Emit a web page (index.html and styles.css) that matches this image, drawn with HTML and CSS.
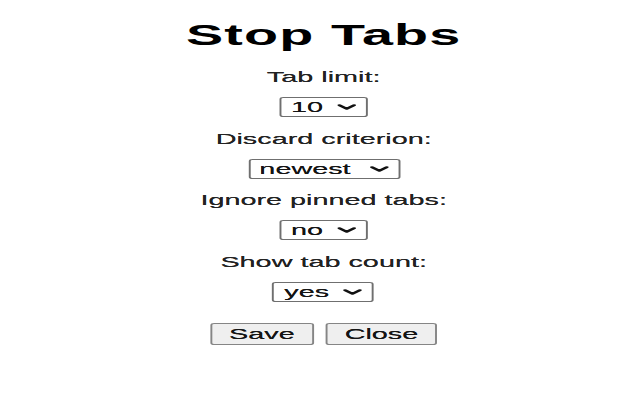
FILE: index.html
```html
<!DOCTYPE html>
<html lang="en">
<head>
<meta charset="utf-8">
<title>Stop Tabs</title>
<link rel="stylesheet" href="styles.css">
</head>
<body>
<main class="popup">
  <h1 class="title">Stop Tabs</h1>
  <form class="options">
    <div class="field">
      <label class="field-label" for="limit">Tab limit:</label>
      <span class="select-wrap">
        <select id="limit" class="select sel-sm">
          <option>5</option>
          <option selected>10</option>
          <option>15</option>
          <option>20</option>
        </select>
        <svg class="chevron" viewBox="0 0 10 6" aria-hidden="true"><path d="M1.2 1.2 L5 4.7 L8.8 1.2"/></svg>
      </span>
    </div>
    <div class="field">
      <label class="field-label" for="criterion">Discard criterion:</label>
      <span class="select-wrap">
        <select id="criterion" class="select sel-lg">
          <option selected>newest</option>
          <option>oldest</option>
        </select>
        <svg class="chevron" viewBox="0 0 10 6" aria-hidden="true"><path d="M1.2 1.2 L5 4.7 L8.8 1.2"/></svg>
      </span>
    </div>
    <div class="field">
      <label class="field-label" for="pinned">Ignore pinned tabs:</label>
      <span class="select-wrap">
        <select id="pinned" class="select sel-sm">
          <option>yes</option>
          <option selected>no</option>
        </select>
        <svg class="chevron" viewBox="0 0 10 6" aria-hidden="true"><path d="M1.2 1.2 L5 4.7 L8.8 1.2"/></svg>
      </span>
    </div>
    <div class="field">
      <label class="field-label" for="count">Show tab count:</label>
      <span class="select-wrap">
        <select id="count" class="select sel-md">
          <option selected>yes</option>
          <option>no</option>
        </select>
        <svg class="chevron" viewBox="0 0 10 6" aria-hidden="true"><path d="M1.2 1.2 L5 4.7 L8.8 1.2"/></svg>
      </span>
    </div>
    <div class="actions">
      <button type="button" class="btn">Save</button>
      <button type="button" class="btn">Close</button>
    </div>
  </form>
</main>
</body>
</html>
```

FILE: styles.css
```css
html,
body {
  margin: 0;
  background: #fff;
}

body {
  font-family: "Liberation Sans", Arial, sans-serif;
  color: #222;
}

.popup {
  box-sizing: border-box;
  width: 320px;
  margin: 0 auto;
  display: flex;
  flex-direction: column;
  align-items: center;
  padding-top: 18px;
  transform: scaleX(1.92);
  transform-origin: 156px 0;
}

.title {
  margin: 0;
  font-size: 29px;
  line-height: 34px;
  font-weight: bold;
  letter-spacing: 0.6px;
  color: #000;
}

.options {
  display: flex;
  flex-direction: column;
  align-items: center;
  margin: 16px 0 0;
}

.field {
  display: flex;
  flex-direction: column;
  align-items: center;
  gap: 11px;
  margin-bottom: 12.7px;
}

.field-label {
  font-size: 15px;
  line-height: 18px;
  text-shadow: 0 0 0.4px #222;
}

.select-wrap {
  position: relative;
  display: block;
  height: 20px;
}

.select {
  appearance: none;
  -webkit-appearance: none;
  box-sizing: border-box;
  display: block;
  height: 20px;
  margin: 0;
  padding: 0 0 0 5px;
  border: 1px solid #6f6f6f;
  border-radius: 2px;
  background: #fff;
  font: 15px/18px "Liberation Sans", Arial, sans-serif;
  color: #141414;
  text-shadow: 0 0 0.4px #141414;
}

.sel-sm {
  width: 46px;
}

.sel-md {
  width: 53px;
}

.sel-lg {
  width: 79px;
}

.chevron {
  position: absolute;
  right: 6px;
  top: 7px;
  width: 10px;
  height: 6px;
  pointer-events: none;
  fill: none;
  stroke: #111;
  stroke-width: 2;
  stroke-linecap: round;
  stroke-linejoin: round;
}

.actions {
  display: flex;
  gap: 6px;
  margin-top: 8px;
}

.btn {
  box-sizing: border-box;
  height: 22px;
  margin: 0;
  padding: 0 9px;
  border: 1px solid #858585;
  border-radius: 2px;
  background: #efefef;
  font: 15px/18px "Liberation Sans", Arial, sans-serif;
  color: #141414;
  text-shadow: 0 0 0.4px #141414;
}
```
